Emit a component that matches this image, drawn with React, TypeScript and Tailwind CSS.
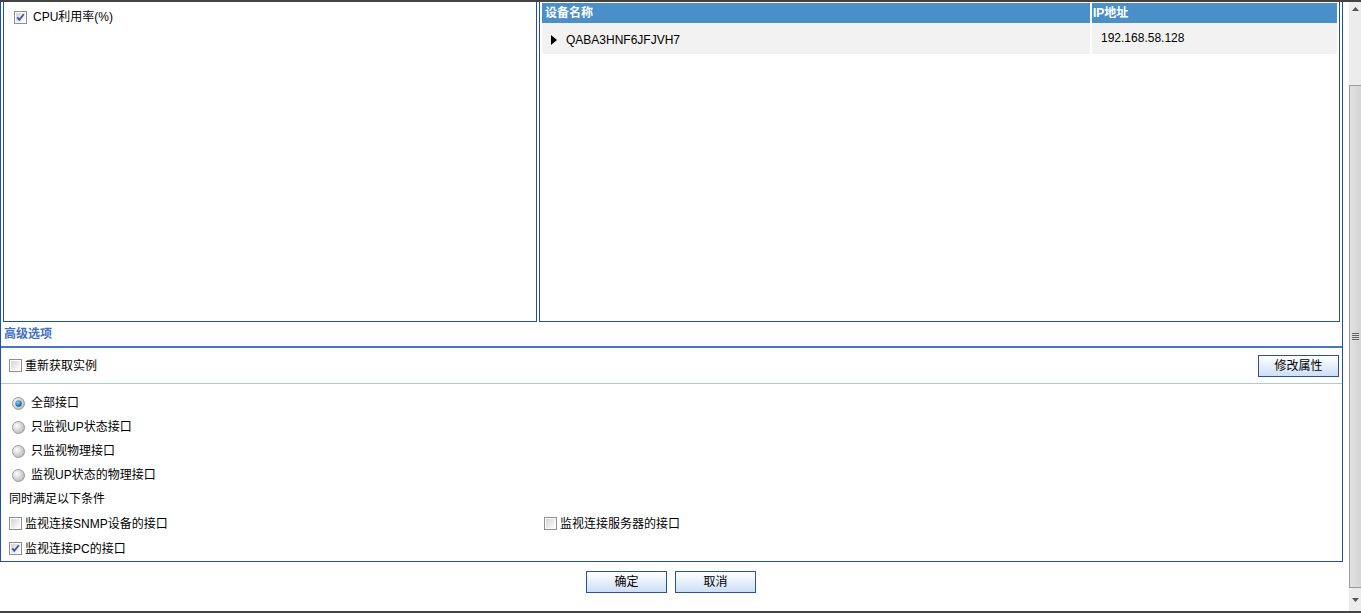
import React from "react";

const FONT = '"Liberation Sans", Arial, "Noto Sans CJK SC", sans-serif';

function CheckBox({ checked }: { checked?: boolean }) {
  return (
    <svg width="13" height="13" viewBox="0 0 13 13" className="shrink-0">
      <defs>
        <linearGradient id="cbg" x1="0" y1="0" x2="1" y2="1">
          <stop offset="0" stopColor="#d4d4d4" />
          <stop offset="1" stopColor="#ffffff" />
        </linearGradient>
      </defs>
      <rect x="0.5" y="0.5" width="12" height="12" fill="#fff" stroke="#8e8f8f" />
      <rect x="2" y="2" width="9" height="9" fill="url(#cbg)" />
      {checked && (
        <path d="M3.2 6.3 L5.3 8.8 L9.8 3.2" fill="none" stroke="#3a5aa8" strokeWidth="1.8" />
      )}
    </svg>
  );
}

function Radio({ checked }: { checked?: boolean }) {
  return (
    <svg width="13" height="13" viewBox="0 0 13 13" className="shrink-0">
      <defs>
        <radialGradient id="rg" cx="0.35" cy="0.35" r="0.7">
          <stop offset="0" stopColor="#ffffff" />
          <stop offset="1" stopColor="#b8b8b8" />
        </radialGradient>
        <radialGradient id="rgs" cx="0.4" cy="0.35" r="0.7">
          <stop offset="0" stopColor="#7fd0f5" />
          <stop offset="1" stopColor="#0a4f8e" />
        </radialGradient>
      </defs>
      <circle cx="6.5" cy="6.5" r="6" fill="url(#rg)" stroke="#999" />
      {checked && <circle cx="6.5" cy="6.5" r="3.2" fill="url(#rgs)" />}
    </svg>
  );
}

function Btn({ children, w }: { children: React.ReactNode; w: string }) {
  return (
    <div
      className={`${w} h-[22px] border border-[#2b5199] bg-gradient-to-b from-[#ffffff] to-[#cddff5] flex items-center justify-center text-[12px] text-black`}
    >
      {children}
    </div>
  );
}

export default function App() {
  return (
    <div
      className="w-[1361px] h-[613px] bg-white flex flex-col overflow-hidden text-[12px] text-black"
      style={{ fontFamily: FONT }}
    >
      <div className="h-[2px] bg-[#434343] shrink-0" />
      <div className="flex flex-1 min-h-0">
        {/* content */}
        <div className="w-[1349px] flex flex-col">
          <div className="w-[1343px] border-l border-r border-b border-[#1e4fb0] flex flex-col shrink-0">
            {/* panels */}
            <div className="flex h-[320px] shrink-0 pl-[2px] gap-[2px]">
              <div className="w-[534px] h-full border-l border-r border-b border-[#1e4fb0] pt-[8px] pl-[10px]">
                <div className="flex items-center gap-[6px] h-[14px]">
                  <CheckBox checked />
                  <span>CPU利用率(%)</span>
                </div>
              </div>
              <div className="w-[801px] h-full border-l border-r border-b border-[#1e4fb0] px-[2px] pt-[1px]">
                <div className="flex h-[20px] bg-[#4a8fc7] text-white font-bold">
                  <div className="w-[548px] pl-[3px] flex items-center">设备名称</div>
                  <div className="w-[2px] bg-white" />
                  <div className="flex-1 pl-[1px] flex items-center">IP地址</div>
                </div>
                <div className="flex h-[31px] bg-[#f2f2f2]">
                  <div className="w-[548px] pl-[9px] pt-[11px] flex items-start">
                    <svg width="6" height="10" viewBox="0 0 6 10" className="mt-[1px]">
                      <path d="M0 0 L6 5 L0 10 Z" fill="#000" />
                    </svg>
                    <span className="ml-[9px] leading-[12px]">QABA3HNF6JFJVH7</span>
                  </div>
                  <div className="w-[2px] bg-white" />
                  <div className="flex-1 pl-[9px] pt-[9px] leading-[12px]">192.168.58.128</div>
                </div>
              </div>
            </div>
            {/* advanced title */}
            <div className="h-[24px] shrink-0 flex items-center pl-[3px] text-[#3f6fc4] font-bold">高级选项</div>
            <div className="h-[2px] shrink-0 bg-[#4a76c6]" />
            <div className="h-[35px] shrink-0 flex items-center justify-between pl-[8px] pr-[3px]">
              <div className="flex items-center gap-[3px]">
                <CheckBox />
                <span>重新获取实例</span>
              </div>
              <Btn w="w-[81px]">修改属性</Btn>
            </div>
            <div className="h-[1px] shrink-0 bg-[#a9c9ee]" />
            <div className="flex flex-col pl-[11px] pt-[7px] shrink-0">
              {[
                ["全部接口", true],
                ["只监视UP状态接口", false],
                ["只监视物理接口", false],
                ["监视UP状态的物理接口", false],
              ].map(([t, c]) => (
                <div key={t as string} className="h-[24px] flex items-center gap-[6px]">
                  <Radio checked={c as boolean} />
                  <span>{t as string}</span>
                </div>
              ))}
            </div>
            <div className="pl-[8px] h-[24px] shrink-0 flex items-center">同时满足以下条件</div>
            <div className="flex pl-[8px] h-[25px] shrink-0 items-center">
              <div className="w-[535px] flex items-center gap-[3px]">
                <CheckBox />
                <span>监视连接SNMP设备的接口</span>
              </div>
              <div className="flex items-center gap-[3px]">
                <CheckBox />
                <span>监视连接服务器的接口</span>
              </div>
            </div>
            <div className="flex pl-[8px] h-[25px] shrink-0 items-center">
              <div className="flex items-center gap-[3px]">
                <CheckBox checked />
                <span>监视连接PC的接口</span>
              </div>
            </div>
          </div>
          <div className="flex justify-center gap-[8px] pt-[9px] pr-[7px]">
            <Btn w="w-[81px]">确定</Btn>
            <Btn w="w-[81px]">取消</Btn>
          </div>
        </div>
        {/* scrollbar */}
        <div className="w-[12px] bg-[#ececec] flex flex-col items-center">
          <div className="h-[14px] w-full flex items-center justify-center">
            <svg width="7" height="4" viewBox="0 0 7 4">
              <path d="M0 4 L3.5 0 L7 4 Z" fill="#555" />
            </svg>
          </div>
          <div className="h-[69px]" />
          <div className="w-full h-[503px] border-l border-t border-b border-[#9a9a9a] bg-gradient-to-r from-[#e2e2e2] to-[#d4d4d4] flex items-center justify-center">
            <div className="flex flex-col gap-[1px]">
              <div className="w-[7px] h-[1px] bg-[#666]" />
              <div className="w-[7px] h-[1px] bg-[#666]" />
              <div className="w-[7px] h-[1px] bg-[#666]" />
              <div className="w-[7px] h-[1px] bg-[#666]" />
            </div>
          </div>
          <div className="flex-1 w-full flex items-center justify-center">
            <svg width="7" height="4" viewBox="0 0 7 4">
              <path d="M0 0 L3.5 4 L7 0 Z" fill="#555" />
            </svg>
          </div>
        </div>
      </div>
      <div className="h-[2px] bg-[#434343] shrink-0" />
    </div>
  );
}
